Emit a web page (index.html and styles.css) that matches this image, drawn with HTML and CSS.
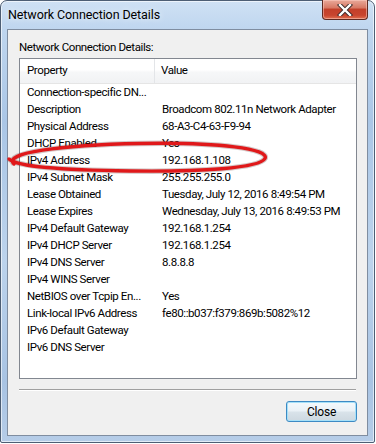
FILE: index.html
```html
<!DOCTYPE html>
<html>
<head>
<meta charset="utf-8">
<link rel="stylesheet" href="styles.css">
</head>
<body>
<div class="window">
  <div class="titlebar">
    <span class="title">Network Connection Details</span>
    <div class="close-btn">
      <svg width="20" height="12" viewBox="0 0 20 12">
        <path d="M5 1 L15 11 M15 1 L5 11" stroke="#3a2a2a" stroke-width="4.2" stroke-linecap="square" fill="none"/>
        <path d="M5 1 L15 11 M15 1 L5 11" stroke="#ffffff" stroke-width="2.4" stroke-linecap="square" fill="none"/>
      </svg>
    </div>
  </div>
  <div class="client">
    <div class="group-label">Network Connection Details:</div>
    <div class="listbox">
      <div class="header">
        <div class="hcell col-prop">Property</div>
        <div class="hcell col-val">Value</div>
      </div>
      <div class="rows">
        <div class="row"><span class="prop">Connection-specific DN...</span><span class="val"></span></div>
        <div class="row"><span class="prop">Description</span><span class="val">Broadcom 802.11n Network Adapter</span></div>
        <div class="row"><span class="prop">Physical Address</span><span class="val">68-A3-C4-63-F9-94</span></div>
        <div class="row"><span class="prop">DHCP Enabled</span><span class="val">Yes</span></div>
        <div class="row"><span class="prop">IPv4 Address</span><span class="val">192.168.1.108</span></div>
        <div class="row"><span class="prop">IPv4 Subnet Mask</span><span class="val">255.255.255.0</span></div>
        <div class="row"><span class="prop">Lease Obtained</span><span class="val">Tuesday, July 12, 2016 8:49:54 PM</span></div>
        <div class="row"><span class="prop">Lease Expires</span><span class="val">Wednesday, July 13, 2016 8:49:53 PM</span></div>
        <div class="row"><span class="prop">IPv4 Default Gateway</span><span class="val">192.168.1.254</span></div>
        <div class="row"><span class="prop">IPv4 DHCP Server</span><span class="val">192.168.1.254</span></div>
        <div class="row"><span class="prop">IPv4 DNS Server</span><span class="val">8.8.8.8</span></div>
        <div class="row"><span class="prop">IPv4 WINS Server</span><span class="val"></span></div>
        <div class="row"><span class="prop">NetBIOS over Tcpip En...</span><span class="val">Yes</span></div>
        <div class="row"><span class="prop">Link-local IPv6 Address</span><span class="val">fe80::b037:f379:869b:5082%12</span></div>
        <div class="row"><span class="prop">IPv6 Default Gateway</span><span class="val"></span></div>
        <div class="row"><span class="prop">IPv6 DNS Server</span><span class="val"></span></div>
      </div>
    </div>
    <div class="separator"></div>
    <div class="button-row">
      <button class="btn">Close</button>
    </div>
  </div>
  <svg class="annotation" width="376" height="444" viewBox="0 0 376 444">
    <path d="M14 164 C 2 153, 60 145, 140 143.5 C 220 142, 270 149, 265 158.5 C 260 168, 200 172, 130 171 C 60 170, 18 167, 9 159" fill="none" stroke="rgba(60,0,0,0.22)" stroke-width="5.5"/>
    <path d="M14 164 C 2 153, 60 145, 140 143.5 C 220 142, 270 149, 265 158.5 C 260 168, 200 172, 130 171 C 60 170, 18 167, 9 159" fill="none" stroke="#e0181a" stroke-width="3.4" stroke-linecap="round"/>
  </svg>
</div>
</body>
</html>
```
FILE: styles.css
```css
* { box-sizing: border-box; }
html, body { margin: 0; padding: 0; }
body {
  width: 376px;
  height: 444px;
  background: #ffffff;
  font-family: Roboto, "Liberation Sans", Arial, sans-serif;
  font-size: 11.5px;
  letter-spacing: -0.4px;
  color: #000;
  overflow: hidden;
}
.window {
  position: relative;
  width: 375px;
  height: 443px;
  border: 1px solid #4d5e74;
  border-radius: 7px 7px 2px 2px;
  background: linear-gradient(180deg, #cfe1f4 0px, #bfd6ef 28px, #aac6e6 120px, #bcd3ec 260px, #a8c3e3 380px, #b6cde8 443px);
  box-shadow: inset 0 0 0 1px rgba(255,255,255,0.6);
  display: flex;
  flex-direction: column;
}
.titlebar {
  height: 28px;
  display: flex;
  align-items: flex-start;
  padding-left: 7px;
}
.title {
  font-size: 12.5px;
  letter-spacing: -0.1px;
  color: #000;
  margin-top: 6px;
  text-shadow: 0 0 6px rgba(255,255,255,0.9);
}
.close-btn {
  margin-left: auto;
  margin-right: 6px;
  margin-top: -1px;
  width: 46px;
  height: 20px;
  border: 1px solid #5e2a22;
  border-top: none;
  border-radius: 0 0 4px 4px;
  background: linear-gradient(180deg, #e9a99a 0%, #d87a66 40%, #c3402a 50%, #c8452e 80%, #e07050 100%);
  box-shadow: inset 0 0 0 1px rgba(255,210,200,0.5);
  display: flex;
  align-items: center;
  justify-content: center;
}
.close-btn svg { display: block; margin-top: 1px; }
.client {
  flex: 1;
  margin: 0 6px 6px 6px;
  border: 1px solid #7f8da0;
  background: #f0f0f0;
  padding: 10px 10px 0 11px;
  display: flex;
  flex-direction: column;
}
.group-label {
  height: 15px;
  line-height: 15px;
}
.listbox {
  margin-top: 3px;
  width: 338px;
  height: 321px;
  border: 1px solid #828790;
  background: #ffffff;
  display: flex;
  flex-direction: column;
}
.header {
  height: 25px;
  display: flex;
  background: linear-gradient(180deg, #ffffff 0%, #ffffff 45%, #f6f7f8 55%, #f1f2f4 100%);
  border-bottom: 1px solid #e5e5e5;
}
.hcell {
  line-height: 23px;
  padding-left: 7px;
}
.col-prop {
  width: 135px;
  border-right: 1px solid #e3e5e8;
}
.col-val { flex: 1; padding-left: 6px; }
.row {
  height: 17px;
  line-height: 17px;
  display: flex;
  white-space: nowrap;
}
.prop {
  width: 135px;
  flex: none;
  padding-left: 7px;
  overflow: hidden;
}
.val { padding-left: 7px; }
.separator {
  margin-top: 10px;
  width: 337px;
  height: 2px;
  border-top: 1px solid #a0a0a0;
  border-bottom: 1px solid #ffffff;
}
.button-row {
  display: flex;
  justify-content: flex-end;
  width: 338px;
  margin-top: 10px;
}
.btn {
  width: 71px;
  height: 21px;
  padding: 0;
  font-family: Roboto, "Liberation Sans", Arial, sans-serif;
  font-size: 12px;
  letter-spacing: -0.2px;
  color: #000;
  border: 1px solid #3c8ac4;
  border-radius: 3px;
  background: linear-gradient(180deg, #f4f9fc 0%, #eaf1f6 48%, #d9e3ea 52%, #cdd8e0 100%);
  box-shadow: inset 0 0 0 1px #a6e0f8;
}
.annotation {
  position: absolute;
  left: -1px;
  top: -1px;
  pointer-events: none;
}
```
